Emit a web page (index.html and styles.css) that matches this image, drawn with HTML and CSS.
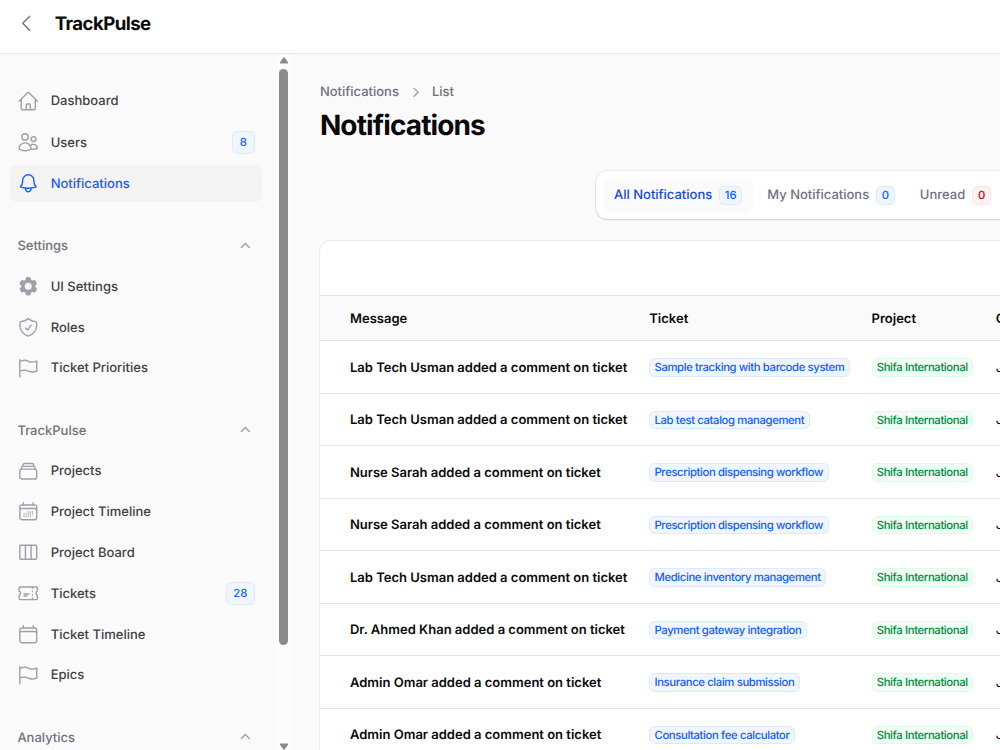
FILE: index.html
```html
<!DOCTYPE html>
<html lang="en">
  <head>
    <meta charset="UTF-8" />
    <meta name="viewport" content="width=device-width, initial-scale=1.0" />
    <title>Notifications - TrackPulse</title>
    <link rel="stylesheet" href="styles.css">
  </head>
  <body>
    <svg class="sprite">
      <symbol id="home" viewBox="0 0 24 24"><path d="m2.25 12 8.954-8.955c.44-.439 1.152-.439 1.591 0L21.75 12M4.5 9.75v10.125c0 .621.504 1.125 1.125 1.125H9.75v-4.875c0-.621.504-1.125 1.125-1.125h2.25c.621 0 1.125.504 1.125 1.125V21h4.125c.621 0 1.125-.504 1.125-1.125V9.75M8.25 21h8.25" /></symbol>
      <symbol id="users" viewBox="0 0 24 24"><path d="M15 19.128a9.38 9.38 0 0 0 2.625.372 9.337 9.337 0 0 0 4.121-.952 4.125 4.125 0 0 0-7.533-2.493M15 19.128v-.003c0-1.113-.285-2.16-.786-3.07M15 19.128v.106A12.318 12.318 0 0 1 8.624 21c-2.331 0-4.512-.645-6.374-1.766l-.001-.109a6.375 6.375 0 0 1 11.964-3.07M12 6.375a3.375 3.375 0 1 1-6.75 0 3.375 3.375 0 0 1 6.75 0Zm8.25 2.25a2.625 2.625 0 1 1-5.25 0 2.625 2.625 0 0 1 5.25 0Z" /></symbol>
      <symbol id="bell" viewBox="0 0 24 24"><path d="M14.857 17.082a23.848 23.848 0 0 0 5.454-1.31A8.967 8.967 0 0 1 18 9.75V9A6 6 0 0 0 6 9v.75a8.967 8.967 0 0 1-2.312 6.022c1.733.64 3.56 1.085 5.455 1.31m5.714 0a24.255 24.255 0 0 1-5.714 0m5.714 0a3 3 0 1 1-5.714 0" /></symbol>
      <symbol id="cog" viewBox="0 0 24 24"><path fill="currentColor" stroke="none" fill-rule="evenodd" d="M11.078 2.25c-.917 0-1.699.663-1.85 1.567L9.05 4.889c-.02.12-.115.26-.297.348a7.493 7.493 0 0 0-.986.57c-.166.115-.334.126-.45.083L6.3 5.508a1.875 1.875 0 0 0-2.282.819l-.922 1.597a1.875 1.875 0 0 0 .432 2.385l.84.692c.095.078.17.229.154.43a7.598 7.598 0 0 0 0 1.139c.015.2-.059.352-.153.43l-.841.692a1.875 1.875 0 0 0-.432 2.385l.922 1.597a1.875 1.875 0 0 0 2.282.818l1.019-.382c.115-.043.283-.031.45.082.312.214.641.405.985.57.182.088.277.228.297.35l.178 1.071c.151.904.933 1.567 1.85 1.567h1.844c.916 0 1.699-.663 1.85-1.567l.178-1.072c.02-.12.114-.26.297-.349.344-.165.673-.356.985-.57.167-.114.335-.125.45-.082l1.02.382a1.875 1.875 0 0 0 2.28-.819l.923-1.597a1.875 1.875 0 0 0-.432-2.385l-.84-.692c-.095-.078-.17-.229-.154-.43a7.614 7.614 0 0 0 0-1.139c-.016-.2.059-.352.153-.43l.84-.692c.708-.582.891-1.59.433-2.385l-.922-1.597a1.875 1.875 0 0 0-2.282-.818l-1.02.382c-.114.043-.282.031-.449-.083a7.49 7.49 0 0 0-.985-.57c-.183-.087-.277-.227-.297-.348l-.179-1.072a1.875 1.875 0 0 0-1.85-1.567h-1.843ZM12 15.75a3.75 3.75 0 1 0 0-7.5 3.75 3.75 0 0 0 0 7.5Z" /></symbol>
      <symbol id="shield" viewBox="0 0 24 24"><path d="M9 12.75 11.25 15 15 9.75m-3-7.036A11.959 11.959 0 0 1 3.598 6 11.99 11.99 0 0 0 3 9.749c0 5.592 3.824 10.29 9 11.623 5.176-1.332 9-6.03 9-11.622 0-1.31-.21-2.571-.598-3.751h-.152c-3.196 0-6.1-1.248-8.25-3.285Z" /></symbol>
      <symbol id="flag" viewBox="0 0 24 24"><path d="M3 3v1.5M3 21v-6m0 0 2.77-.693a9 9 0 0 1 6.208.682l.108.054a9 9 0 0 0 6.086.71l3.114-.732a48.524 48.524 0 0 1-.005-10.499l-3.11.732a9 9 0 0 1-6.085-.711l-.108-.054a9 9 0 0 0-6.208-.682L3 4.5M3 15V4.5" /></symbol>
      <symbol id="stack" viewBox="0 0 24 24"><path d="M6 6.878V6a2.25 2.25 0 0 1 2.25-2.25h7.5A2.25 2.25 0 0 1 18 6v.878m-12 0c.235-.083.487-.128.75-.128h10.5c.263 0 .515.045.75.128m-12 0A2.25 2.25 0 0 0 4.5 9v.878m13.5-3A2.25 2.25 0 0 1 19.5 9v.878m0 0a2.246 2.246 0 0 0-.75-.128H5.25c-.263 0-.515.045-.75.128m15 0A2.25 2.25 0 0 1 21 12v6a2.25 2.25 0 0 1-2.25 2.25H5.25A2.25 2.25 0 0 1 3 18v-6c0-.98.626-1.813 1.5-2.122" /></symbol>
      <symbol id="calendar" viewBox="0 0 24 24"><path d="M6.75 3v2.25M17.25 3v2.25M3 18.75V7.5a2.25 2.25 0 0 1 2.25-2.25h13.5A2.25 2.25 0 0 1 21 7.5v11.25m-18 0A2.25 2.25 0 0 0 5.25 21h13.5A2.25 2.25 0 0 0 21 18.75m-18 0v-7.5A2.25 2.25 0 0 1 5.25 9h13.5A2.25 2.25 0 0 1 21 11.25v7.5" /></symbol>
      <symbol id="calendar-days" viewBox="0 0 24 24"><path d="M6.75 3v2.25M17.25 3v2.25M3 18.75V7.5a2.25 2.25 0 0 1 2.25-2.25h13.5A2.25 2.25 0 0 1 21 7.5v11.25m-18 0A2.25 2.25 0 0 0 5.25 21h13.5A2.25 2.25 0 0 0 21 18.75m-18 0v-7.5A2.25 2.25 0 0 1 5.25 9h13.5A2.25 2.25 0 0 1 21 11.25v7.5m-9-6h.008v.008H12v-.008ZM12 15h.008v.008H12V15Zm0 2.25h.008v.008H12v-.008ZM9.75 15h.008v.008H9.75V15Zm0 2.25h.008v.008H9.75v-.008ZM7.5 15h.008v.008H7.5V15Zm0 2.25h.008v.008H7.5v-.008Zm6.75-4.5h.008v.008h-.008v-.008Zm0 2.25h.008v.008h-.008V15Zm0 2.25h.008v.008h-.008v-.008Zm2.25-4.5h.008v.008H16.5v-.008Zm0 2.25h.008v.008H16.5V15Z" /></symbol>
      <symbol id="columns" viewBox="0 0 24 24"><path d="M9 4.5v15m6-15v15m-10.875 0h15.75c.621 0 1.125-.504 1.125-1.125V5.625c0-.621-.504-1.125-1.125-1.125H4.125C3.504 4.5 3 5.004 3 5.625v12.75c0 .621.504 1.125 1.125 1.125Z" /></symbol>
      <symbol id="ticket" viewBox="0 0 24 24"><path d="M16.5 6v.75m0 3v.75m0 3v.75m0 3V18m-9-5.25h5.25M7.5 15h3M3.375 5.25c-.621 0-1.125.504-1.125 1.125v3.026a2.999 2.999 0 0 1 0 5.198v3.026c0 .621.504 1.125 1.125 1.125h17.25c.621 0 1.125-.504 1.125-1.125v-3.026a2.999 2.999 0 0 1 0-5.198V6.375c0-.621-.504-1.125-1.125-1.125H3.375Z" /></symbol>
      <symbol id="chevron-left" viewBox="0 0 24 24"><path d="M15.75 19.5 8.25 12l7.5-7.5" /></symbol>
      <symbol id="chevron-up" viewBox="0 0 20 20"><path fill="currentColor" stroke="none" fill-rule="evenodd" d="M9.47 6.47a.75.75 0 0 1 1.06 0l4.25 4.25a.75.75 0 1 1-1.06 1.06L10 8.06l-3.72 3.72a.75.75 0 0 1-1.06-1.06l4.25-4.25Z" /></symbol>
      <symbol id="chevron-right" viewBox="0 0 20 20"><path fill="currentColor" stroke="none" fill-rule="evenodd" d="M8.22 5.22a.75.75 0 0 1 1.06 0l4.25 4.25a.75.75 0 0 1 0 1.06l-4.25 4.25a.75.75 0 0 1-1.06-1.06L11.94 10 8.22 6.28a.75.75 0 0 1 0-1.06Z" /></symbol>
    </svg>

    <header class="topbar">
      <svg class="icon"><use href="#chevron-left" /></svg>
      <div class="brand">TrackPulse</div>
    </header>

    <div class="layout">
      <aside class="sidebar">
        <nav class="nav">
          <div class="group">
            <a class="item"><svg class="icon"><use href="#home" /></svg><span>Dashboard</span></a>
            <a class="item has-badge"><svg class="icon"><use href="#users" /></svg><span>Users</span><b class="count">8</b></a>
            <a class="item active"><svg class="icon"><use href="#bell" /></svg><span>Notifications</span></a>
          </div>
          <div class="group">
            <div class="group-title"><span>Settings</span><svg class="chevron"><use href="#chevron-up" /></svg></div>
            <a class="item"><svg class="icon"><use href="#cog" /></svg><span>UI Settings</span></a>
            <a class="item"><svg class="icon"><use href="#shield" /></svg><span>Roles</span></a>
            <a class="item"><svg class="icon"><use href="#flag" /></svg><span>Ticket Priorities</span></a>
          </div>
          <div class="group">
            <div class="group-title"><span>TrackPulse</span><svg class="chevron"><use href="#chevron-up" /></svg></div>
            <a class="item"><svg class="icon"><use href="#stack" /></svg><span>Projects</span></a>
            <a class="item"><svg class="icon"><use href="#calendar-days" /></svg><span>Project Timeline</span></a>
            <a class="item"><svg class="icon"><use href="#columns" /></svg><span>Project Board</span></a>
            <a class="item has-badge"><svg class="icon"><use href="#ticket" /></svg><span>Tickets</span><b class="count">28</b></a>
            <a class="item"><svg class="icon"><use href="#calendar" /></svg><span>Ticket Timeline</span></a>
            <a class="item"><svg class="icon"><use href="#flag" /></svg><span>Epics</span></a>
          </div>
          <div class="group">
            <div class="group-title"><span>Analytics</span><svg class="chevron"><use href="#chevron-up" /></svg></div>
          </div>
        </nav>
        <div class="scrollbar">
          <svg class="arrow" viewBox="0 0 10 7"><path d="M5 .3Q5.6 .3 6 .9L9 5.2Q9.6 6.5 8.5 6.5H1.5Q.4 6.5 1 5.2L4 .9Q4.4 .3 5 .3Z" /></svg>
          <div class="thumb"></div>
          <svg class="arrow down" viewBox="0 0 10 7"><path d="M5 .3Q5.6 .3 6 .9L9 5.2Q9.6 6.5 8.5 6.5H1.5Q.4 6.5 1 5.2L4 .9Q4.4 .3 5 .3Z" /></svg>
        </div>
      </aside>

      <main class="main">
        <div class="breadcrumbs">
          <span>Notifications</span>
          <svg class="chevron"><use href="#chevron-right" /></svg>
          <span>List</span>
        </div>
        <h1>Notifications</h1>

        <div class="tabs">
          <a class="tab active">All Notifications <span class="badge blue">16</span></a>
          <a class="tab">My Notifications <span class="badge blue">0</span></a>
          <a class="tab">Unread <span class="badge red">0</span></a>
        </div>

        <div class="table">
          <div class="toolbar"></div>
          <div class="row head"><span>Message</span><span>Ticket</span><span>Project</span><span>Created At</span></div>
          <div class="row"><strong>Lab Tech Usman added a comment on ticket</strong><span class="badge blue">Sample tracking with barcode system</span><span class="badge green">Shifa International</span><span class="date">Jul</span></div>
          <div class="row"><strong>Lab Tech Usman added a comment on ticket</strong><span class="badge blue">Lab test catalog management</span><span class="badge green">Shifa International</span><span class="date">Jul</span></div>
          <div class="row"><strong>Nurse Sarah added a comment on ticket</strong><span class="badge blue">Prescription dispensing workflow</span><span class="badge green">Shifa International</span><span class="date">Jul</span></div>
          <div class="row"><strong>Nurse Sarah added a comment on ticket</strong><span class="badge blue">Prescription dispensing workflow</span><span class="badge green">Shifa International</span><span class="date">Jul</span></div>
          <div class="row"><strong>Lab Tech Usman added a comment on ticket</strong><span class="badge blue">Medicine inventory management</span><span class="badge green">Shifa International</span><span class="date">Jul</span></div>
          <div class="row"><strong>Dr. Ahmed Khan added a comment on ticket</strong><span class="badge blue">Payment gateway integration</span><span class="badge green">Shifa International</span><span class="date">Jul</span></div>
          <div class="row"><strong>Admin Omar added a comment on ticket</strong><span class="badge blue">Insurance claim submission</span><span class="badge green">Shifa International</span><span class="date">Jul</span></div>
          <div class="row"><strong>Admin Omar added a comment on ticket</strong><span class="badge blue">Consultation fee calculator</span><span class="badge green">Shifa International</span><span class="date">Jul</span></div>
        </div>
      </main>
    </div>
  </body>
</html>
```
FILE: styles.css
```css
* {
  box-sizing: border-box;
}

body {
  margin: 0;
  height: 100vh;
  overflow: hidden;
  font-family: Inter, "Liberation Sans", sans-serif;
  font-size: 13px;
  line-height: 18.6px;
  text-rendering: geometricPrecision;
  color: #09090b;
  background-color: #fafafa;
}

.sprite {
  display: none;
}

.icon {
  width: 22.5px;
  height: 22.5px;
  flex: none;
  fill: none;
  stroke: currentColor;
  stroke-width: 1.5;
  stroke-linecap: round;
  stroke-linejoin: round;
  color: #9f9fa9;
}

.chevron {
  width: 18.7px;
  height: 18.7px;
  flex: none;
  color: #9f9fa9;
}

.topbar {
  display: flex;
  align-items: center;
  height: 54px;
  padding: 0 15.2px 6px;
  background-color: #fff;
  border-bottom: 1px solid #e6e6e7;
}

.topbar .icon {
  color: #71717b;
}

.brand {
  margin-left: 17px;
  padding-top: 1.4px;
  font-size: 18.6px;
  font-weight: 700;
  letter-spacing: -0.55px;
}

.layout {
  display: flex;
  height: calc(100vh - 54px);
}

/* Sidebar */
.sidebar {
  display: flex;
  flex: none;
  width: 291px;
  overflow: hidden;
}

.nav {
  display: flex;
  flex-direction: column;
  gap: 26.1px;
  width: 276px;
  padding: 28.8px 14px 0 10.4px;
}

.group {
  display: flex;
  flex-direction: column;
  gap: 4px;
}

.item {
  display: flex;
  flex: none;
  align-items: center;
  gap: 11px;
  height: 36.6px;
  padding: 0 7.5px 0 6.8px;
  border-radius: 7.5px;
  font-weight: 500;
  color: #3f3f46;
}

.item span,
.group-title span {
  padding-top: 1.4px;
}

.item.has-badge {
  height: 37.6px;
}

.item.active {
  color: #155dfc;
  background-color: #f3f3f4;
}

.item.active .icon {
  color: #155dfc;
}

.group-title {
  display: flex;
  flex: none;
  align-items: center;
  justify-content: space-between;
  height: 36.6px;
  padding: 0 7.5px 0 7px;
  font-weight: 500;
  color: #71717b;
}

.count {
  min-width: 22.5px;
  margin-left: auto;
  padding: 1.4px 6.2px 0.6px;
  border: 1px solid #dbeafe;
  border-radius: 5.6px;
  font-size: 11.3px;
  font-weight: 500;
  text-align: center;
  line-height: 19px;
  color: #155dfc;
  background-color: #eff6ff;
}

.scrollbar {
  display: flex;
  flex-direction: column;
  align-items: center;
  width: 15px;
  padding-top: 3px;
  background-color: #fcfcfc;
}

.arrow {
  width: 10px;
  height: 7px;
  fill: #8b8b8b;
}

.arrow.down {
  margin: auto 0 0;
  transform: rotate(180deg);
}

.thumb {
  width: 8.6px;
  height: 576px;
  margin-top: 5.4px;
  border-radius: 5px;
  background-color: #8b8b8b;
}

/* Page */
.main {
  flex: 1;
  min-width: 0;
  padding: 29px 0 0 28.4px;
}

.breadcrumbs {
  display: flex;
  align-items: center;
  gap: 7.2px;
  padding-left: 0.5px;
  font-weight: 500;
  color: #71717b;
}

h1 {
  margin: 6px 0 0 0.5px;
  font-size: 28px;
  line-height: 34px;
  font-weight: 700;
  letter-spacing: -0.88px;
}

.tabs {
  display: flex;
  gap: 4px;
  width: 460px;
  height: 48px;
  margin: 29.4px 0 0 276.6px;
  padding: 7.5px;
  border-radius: 11.3px;
  background-color: #fff;
  box-shadow: 0 0 0 1px rgba(9, 9, 11, 0.06), 0 1px 2px rgba(0, 0, 0, 0.12);
}

.tab {
  display: flex;
  align-items: center;
  gap: 7px;
  padding: 0.6px 10.5px 0;
  border-radius: 7.5px;
  font-weight: 500;
  white-space: nowrap;
  color: #71717b;
}

.tab.active {
  color: #1447e6;
  background-color: #fafafa;
}

.badge {
  justify-self: start;
  padding: 0 4.6px;
  border: 1px solid;
  border-radius: 5.6px;
  font-size: 11.3px;
  line-height: 16.8px;
  font-weight: 500;
  white-space: nowrap;
}

.badge.blue {
  color: #155dfc;
  background-color: #eff6ff;
  border-color: #dbeafe;
}

.badge.green {
  color: #008a3c;
  background-color: #f0fdf4;
  border-color: #dcfce7;
}

.badge.red {
  color: #c10007;
  background-color: #fef2f2;
  border-color: #ffe2e2;
}

.tabs .badge {
  min-width: 18.7px;
  text-align: center;
}

.row .badge {
  padding-left: 4.2px;
  letter-spacing: -0.37px;
}

.table {
  width: 800px;
  height: 600px;
  margin-top: 21px;
  border: 1px solid #e9e9ea;
  border-radius: 11.3px;
  background-color: #fff;
  overflow: hidden;
}

.toolbar {
  height: 54.3px;
}

.row {
  display: grid;
  grid-template-columns: 299.3px 222.3px 124.2px 120px;
  align-items: center;
  height: 52.5px;
  padding: 0.6px 0 0 29.6px;
  border-top: 1px solid #e4e4e7;
}

.row strong,
.date {
  padding-top: 1px;
}

.row strong {
  font-weight: 600;
}

.row.head {
  height: 45px;
  padding-top: 1.6px;
  font-weight: 600;
  background-color: #fafafa;
}
```
